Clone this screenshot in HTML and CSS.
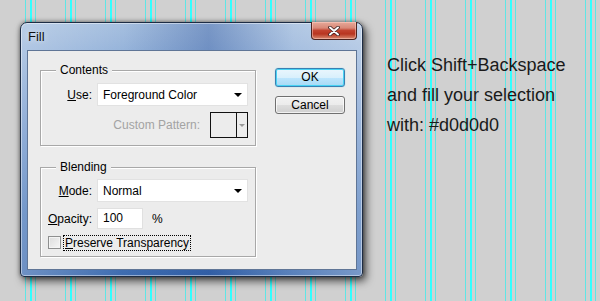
FILE: index.html
```html
<!DOCTYPE html>
<html lang="en">
<head>
    <meta charset="UTF-8">
    <title>Fill</title>
    <link rel="stylesheet" href="styles.css">
</head>
<body>

    <div class="window">
        <div class="title-bar">
            <span class="title">Fill</span>
            <span class="close-btn">
                <svg width="14" height="10" viewBox="0 0 14 10">
                    <path d="M3 1.5 L11 8.5 M11 1.5 L3 8.5" stroke="#3a2020" stroke-width="3.6" stroke-linecap="round"/>
                    <path d="M3 1.5 L11 8.5 M11 1.5 L3 8.5" stroke="#ffffff" stroke-width="2" stroke-linecap="round"/>
                </svg>
            </span>
        </div>

        <div class="client">
            <div class="groups">
                <!-- Contents -->
                <div class="group group-contents">
                    <div class="group-title">Contents</div>
                    <div class="row row-use">
                        <label class="row-label"><u>U</u>se:</label>
                        <div class="select">
                            <span>Foreground Color</span>
                            <span class="arrow"></span>
                        </div>
                    </div>
                    <div class="row row-pattern">
                        <span class="pattern-label">Custom Pattern:</span>
                        <div class="pattern-box">
                            <span class="pattern-swatch"></span>
                            <span class="pattern-drop"><span class="arrow arrow-gray"></span></span>
                        </div>
                    </div>
                </div>

                <!-- Blending -->
                <div class="group group-blending">
                    <div class="group-title">Blending</div>
                    <div class="row row-mode">
                        <label class="row-label"><u>M</u>ode:</label>
                        <div class="select">
                            <span>Normal</span>
                            <span class="arrow"></span>
                        </div>
                    </div>
                    <div class="row row-opacity">
                        <label class="row-label"><u>O</u>pacity:</label>
                        <div class="text-input">100</div>
                        <span class="percent">%</span>
                    </div>
                    <div class="row row-check">
                        <span class="checkbox"></span>
                        <span class="check-label"><u>P</u>reserve Transparency</span>
                    </div>
                </div>
            </div>

            <div class="buttons">
                <div class="btn btn-default">OK</div>
                <div class="btn">Cancel</div>
            </div>
        </div>
    </div>

    <p class="note">Click Shift+Backspace<br>and fill your selection<br>with: #d0d0d0</p>

</body>
</html>
```

FILE: styles.css
```css
body {
    margin: 0;
    height: 301px;
    padding: 22px 0 0 20px;
    box-sizing: border-box;
    display: flex;
    align-items: flex-start;
    font-family: 'Liberation Sans', Arial, sans-serif;
    background-color: #d0d0d0;
    background-image: linear-gradient(to right,
        #5ee6e6 0, #5ee6e6 1px,
        transparent 1px, transparent 5px,
        #30ffff 5px, #30ffff 7px,
        transparent 7px, transparent 10px,
        #5ee6e6 10px, #5ee6e6 11px,
        transparent 11px);
    background-size: 40px 100%;
    background-position: 25px 0;
    overflow: hidden;
}

/* Window frame */
.window {
    width: 343px;
    height: 255px;
    box-sizing: border-box;
    border: 1px solid #1d2c44;
    border-radius: 7px 7px 4px 4px;
    background:
        linear-gradient(to right, rgba(255,255,255,0.25) 0, rgba(255,255,255,0) 30%, rgba(20,60,140,0.3) 55%, rgba(255,255,255,0.15) 80%, rgba(255,255,255,0.3) 100%),
        linear-gradient(to bottom, #a6bfdf 0, #95b3da 12%, #7096cc 40%, #4877b9 75%, #3e6cb0 100%);
    box-shadow: 3px 4px 9px rgba(0, 0, 0, 0.65), 0 0 4px rgba(0, 0, 0, 0.45), inset 0 0 0 1px rgba(255, 255, 255, 0.45);
    display: flex;
    flex-direction: column;
}

.title-bar {
    height: 27px;
    display: flex;
    align-items: flex-start;
    justify-content: space-between;
}

.title {
    font-family: 'Liberation Sans', Arial, sans-serif;
    font-size: 13px;
    color: #111;
    margin: 6px 0 0 7px;
    text-shadow: 0 0 6px rgba(255, 255, 255, 0.8);
}

.close-btn {
    width: 44px;
    height: 17px;
    margin: -1px 5px 0 0;
    border: 1px solid #4a2420;
    border-top: none;
    border-radius: 0 0 4px 4px;
    background: linear-gradient(to bottom, #e6a999 0, #d98978 35%, #c2432f 50%, #b83520 70%, #d88a70 100%);
    box-shadow: inset 0 0 0 1px rgba(255, 210, 200, 0.5);
    display: flex;
    justify-content: center;
    align-items: center;
}

/* Client area */
.client {
    flex: 1;
    margin: 0 5px 6px 6px;
    border: 1px solid #5f7596;
    background: #ececec;
    display: flex;
    align-items: flex-start;
    font-size: 12px;
    color: #000;
}

.groups {
    width: 216px;
    margin-left: 12px;
    display: flex;
    flex-direction: column;
}

.group {
    border: 1px solid #a8a8a8;
    box-shadow: inset 1px 1px 0 #fff, 1px 1px 0 #fff;
    padding: 0 7px 7px 7px;
}

.group-contents {
    margin-top: 19px;
}

.group-blending {
    margin-top: 21px;
    padding-bottom: 5px;
}

.group-title {
    width: fit-content;
    height: 16px;
    line-height: 16px;
    margin: -9px 0 0 8px;
    padding: 0 4px;
    background: #ececec;
}

.row {
    display: flex;
    align-items: center;
}

.row-label {
    width: 44px;
    text-align: right;
    margin-right: 5px;
}

.select {
    width: 151px;
    height: 23px;
    box-sizing: border-box;
    border: 1px solid #e2e2e2;
    background: #fff;
    padding: 0 5px;
    display: flex;
    align-items: center;
    justify-content: space-between;
}

.arrow {
    width: 0;
    height: 0;
    border-left: 4px solid transparent;
    border-right: 4px solid transparent;
    border-top: 4px solid #000;
}

.arrow-gray {
    border-left-width: 3px;
    border-right-width: 3px;
    border-top: 3px solid #9a9a9a;
}

.row-use {
    margin-top: 5px;
}

.row-pattern {
    margin-top: 6px;
    justify-content: flex-end;
}

.pattern-label {
    color: #a3a3a3;
    margin-right: 10px;
}

.pattern-box {
    width: 38px;
    height: 26px;
    box-sizing: border-box;
    border: 1px solid #111;
    display: flex;
}

.pattern-swatch {
    width: 25px;
    border-right: 1px solid #111;
}

.pattern-drop {
    flex: 1;
    display: flex;
    justify-content: center;
    align-items: center;
}

.row-mode {
    margin-top: 4px;
}

.row-opacity {
    margin-top: 6px;
}

.text-input {
    width: 46px;
    height: 21px;
    line-height: 19px;
    box-sizing: border-box;
    border: 1px solid #e0e0e0;
    background: #fff;
    padding-left: 5px;
}

.percent {
    margin-left: 9px;
}

.row-check {
    margin-top: 5px;
    height: 17px;
}

.checkbox {
    width: 13px;
    height: 13px;
    box-sizing: border-box;
    border: 1px solid #8e8f8f;
    background: linear-gradient(135deg, #dcdcdc, #f6f6f6);
    box-shadow: inset 0 0 0 1px #f4f4f4;
    margin-right: 2px;
}

.check-label {
    border: 1px dotted #000;
    padding: 0 1px;
    line-height: 14px;
}

/* Buttons */
.buttons {
    margin: 17px 0 0 19px;
    display: flex;
    flex-direction: column;
    gap: 9px;
}

.btn {
    width: 70px;
    height: 18px;
    box-sizing: border-box;
    border: 1px solid #707070;
    border-radius: 3px;
    background: linear-gradient(to bottom, #f2f2f2 0, #ebebeb 50%, #dddddd 51%, #cfcfcf 100%);
    box-shadow: inset 0 0 0 1px rgba(255, 255, 255, 0.7);
    text-align: center;
    line-height: 16px;
}

.btn-default {
    height: 19px;
    border-color: #3c7fb1;
    background: linear-gradient(to bottom, #eaf6fd 0, #d9f0fc 50%, #bee6fd 51%, #a7d9f5 100%);
    box-shadow: inset 0 0 0 1px #48d3f4, 0 0 1px #48d3f4;
    line-height: 17px;
}

/* Side note */
.note {
    margin: 28px 0 0 24px;
    font-family: 'Liberation Sans', Arial, sans-serif;
    font-size: 18px;
    line-height: 30px;
    color: #1a1a1a;
}
```
